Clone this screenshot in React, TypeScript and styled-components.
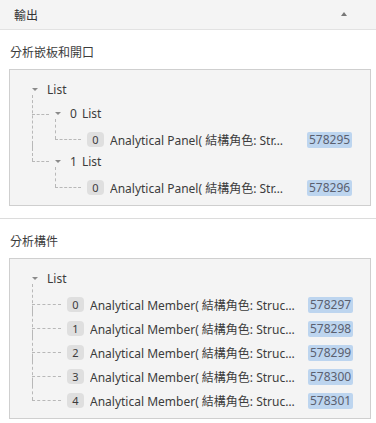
import React from "react";
import styled, { createGlobalStyle } from "styled-components";

const Global = createGlobalStyle`
  html, body { margin: 0; padding: 0; background: #ffffff; }
  body { font-family: "Noto Sans", "Noto Sans CJK TC", sans-serif; color: #3c3c3c; }
  * { box-sizing: border-box; }
`;

const Page = styled.div`
  width: 376px;
  height: 423px;
  overflow: hidden;
  background: #fff;
`;

const Header = styled.div`
  height: 30px;
  background: #f4f4f4;
  border-bottom: 1px solid #e2e2e2;
  display: flex;
  align-items: center;
  justify-content: space-between;
  padding: 0 29px 0 14px;
  font-size: 12px;
  color: #333;
`;

const UpTriangle = styled.span`
  width: 0;
  height: 0;
  border-left: 3.5px solid transparent;
  border-right: 3.5px solid transparent;
  border-bottom: 4px solid #777;
  margin-top: -2px;
`;

const Section = styled.section`
  padding: 12px 5px 12px 9px;
`;

const Divider = styled.div`
  height: 1px;
  background: #dcdcdc;
`;

const SectionTitle = styled.div`
  height: 20px;
  display: flex;
  align-items: center;
  padding-left: 1px;
  font-size: 12px;
  color: #3c3c3c;
  margin-bottom: 7px;
`;

const Panel = styled.div`
  background: #f4f4f4;
  border: 1px solid #cfcfcf;
  padding: 7px 0 8px 22px;
`;

const Row = styled.div<{ $shift?: boolean }>`
  height: 24px;
  display: flex;
  align-items: center;
  padding-top: ${(p) => (p.$shift ? "5px" : "0")};
  font-size: 12px;
  white-space: nowrap;
  color: #3c3c3c;
`;

const Caret = styled.span`
  width: 0;
  height: 0;
  border-left: 3px solid transparent;
  border-right: 3px solid transparent;
  border-top: 3px solid #8a8a8a;
  margin-right: 9px;
`;

const Index = styled.span`
  margin-right: 5px;
`;

const Children = styled.div<{ $indent: number }>`
  margin-left: ${(p) => p.$indent}px;
`;

const Child = styled.div<{ $line: number; $last?: boolean; $mid: number }>`
  position: relative;
  padding-left: ${(p) => p.$line + 6}px;
  &::before {
    content: "";
    position: absolute;
    left: 0;
    top: -6px;
    height: ${(p) => (p.$last ? `${p.$mid + 6}px` : "calc(100% + 6px)")};
    border-left: 1px dashed #b8b8b8;
  }
  &::after {
    content: "";
    position: absolute;
    left: 0;
    top: ${(p) => p.$mid}px;
    width: ${(p) => p.$line}px;
    border-top: 1px dashed #b8b8b8;
  }
`;

const KeyBadge = styled.span`
  display: inline-flex;
  align-items: center;
  justify-content: center;
  min-width: 17px;
  height: 15px;
  padding: 0 4px;
  border-radius: 4px;
  background: #dfdfdf;
  color: #3c3c3c;
  font-size: 11px;
  margin-right: 6px;
`;

const Label = styled.span<{ $w: number }>`
  width: ${(p) => p.$w}px;
  overflow: hidden;
  text-overflow: ellipsis;
`;

const ValueBadge = styled.span`
  display: inline-flex;
  align-items: center;
  height: 16px;
  padding: 0 2px;
  border-radius: 2px;
  background: #bdd5ef;
  color: #5a6070;
  font-size: 12px;
`;

const ListRow = ({ idx }: { idx?: string }) => (
  <Row>
    <Caret />
    {idx !== undefined && <Index>{idx}</Index>}
    <span>List</span>
  </Row>
);

const ItemRow = ({ k, text, id, w }: { k: string; text: string; id: string; w: number }) => (
  <Row $shift>
    <KeyBadge>{k}</KeyBadge>
    <Label $w={w}>{text}</Label>
    <ValueBadge>{id}</ValueBadge>
  </Row>
);

const members = ["578297", "578298", "578299", "578300", "578301"];

export default function App() {
  return (
    <Page>
      <Global />
      <Header>
        <span>輸出</span>
        <UpTriangle />
      </Header>
      <Section>
        <SectionTitle>分析嵌板和開口</SectionTitle>
        <Panel>
          <ListRow />
          <Children $indent={0}>
            <Child $line={17} $mid={13}>
              <ListRow idx="0" />
              <Children $indent={0}>
                <Child $line={26} $mid={14} $last>
                  <ItemRow k="0" text="Analytical Panel( 結構角色: Str…" id="578295" w={197} />
                </Child>
              </Children>
            </Child>
            <Child $line={17} $mid={12} $last>
              <ListRow idx="1" />
              <Children $indent={0}>
                <Child $line={26} $mid={14} $last>
                  <ItemRow k="0" text="Analytical Panel( 結構角色: Str…" id="578296" w={197} />
                </Child>
              </Children>
            </Child>
          </Children>
        </Panel>
      </Section>
      <Divider />
      <Section>
        <SectionTitle>分析構件</SectionTitle>
        <Panel>
          <ListRow />
          <Children $indent={0}>
            {members.map((id, i) => (
              <Child key={id} $line={29} $mid={14} $last={i === members.length - 1}>
                <ItemRow k={String(i)} text="Analytical Member( 結構角色: Struc…" id={id} w={218} />
              </Child>
            ))}
          </Children>
        </Panel>
      </Section>
    </Page>
  );
}
